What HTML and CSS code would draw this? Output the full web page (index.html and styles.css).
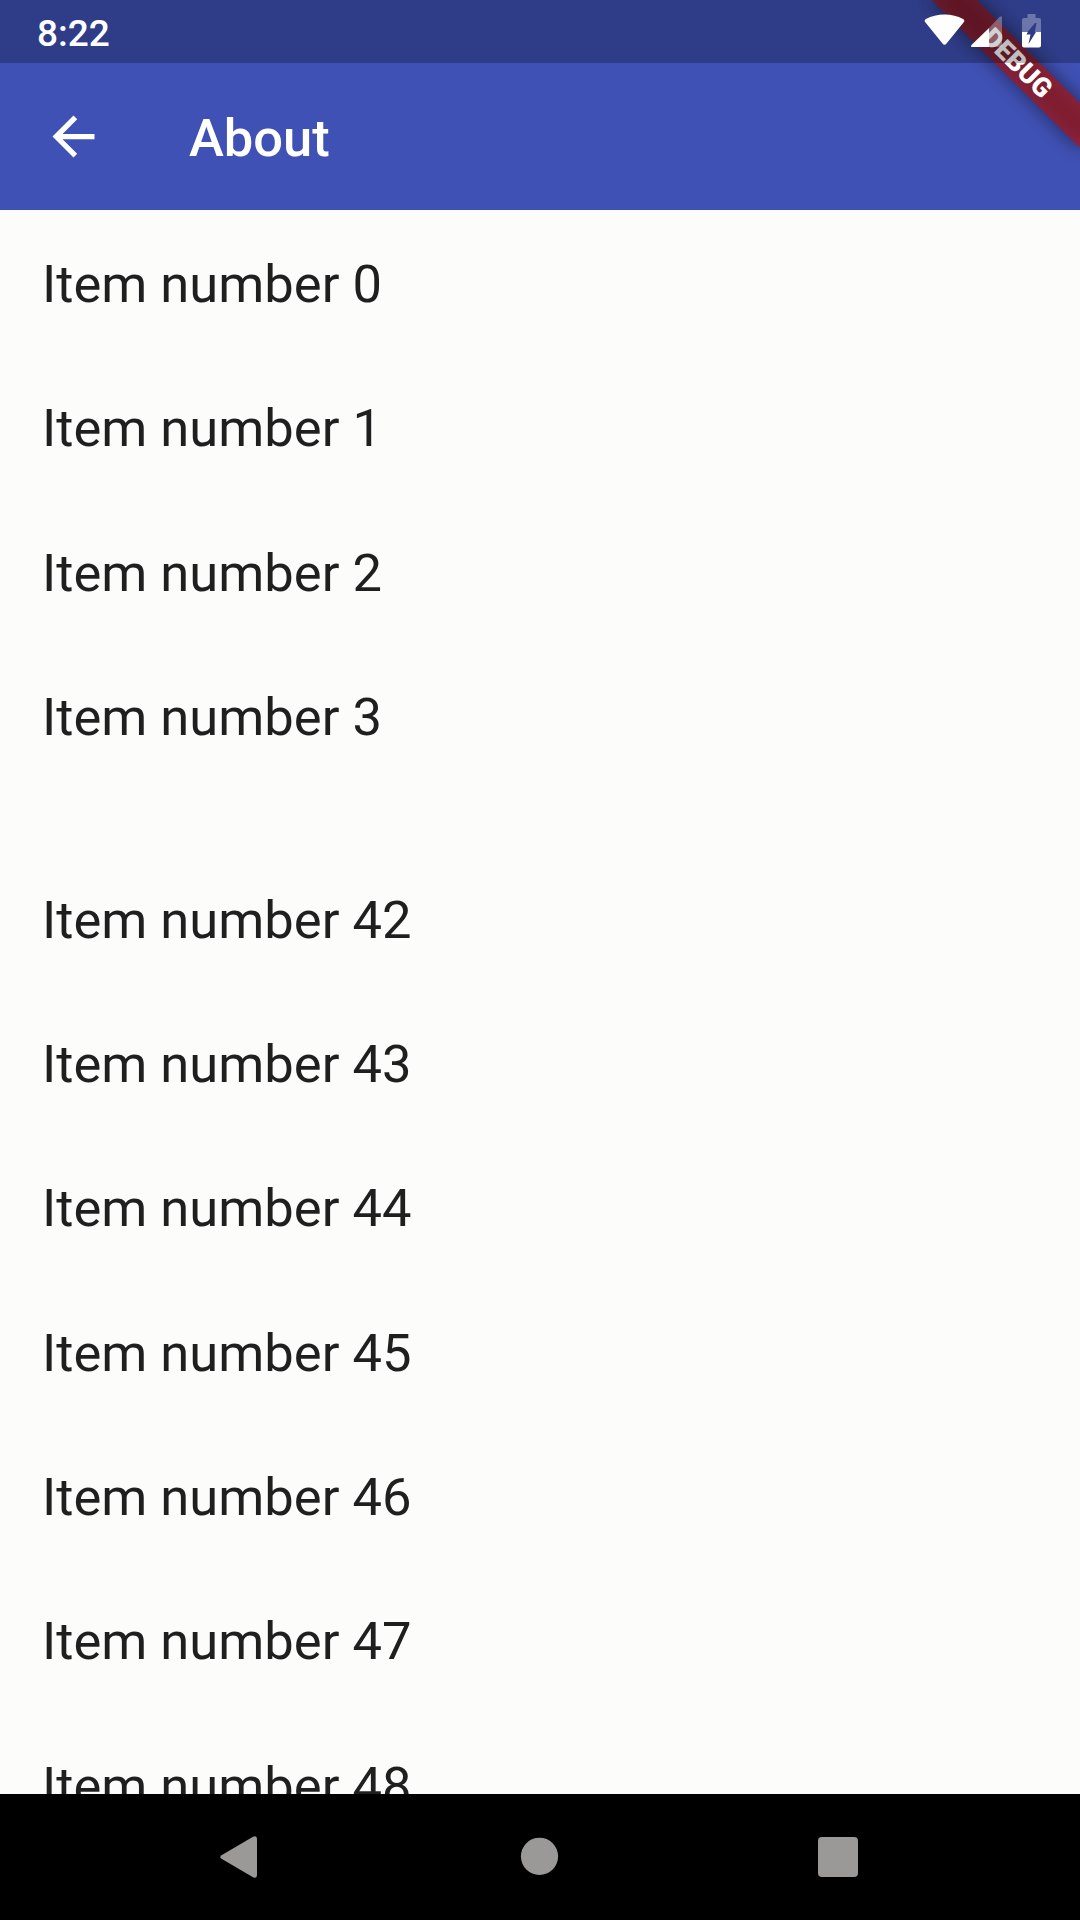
FILE: index.html
```
<!DOCTYPE html>
<html lang="en">
<head>
<meta charset="utf-8">
<title>About</title>
<link rel="stylesheet" href="styles.css">
</head>
<body>
<div class="screen">
  <header class="top">
    <div class="status-space"></div>
    <div class="app-bar">
      <svg class="back" viewBox="0 0 24 24" aria-label="Back"><path d="M20 11H7.83l5.59-5.59L12 4l-8 8 8 8 1.41-1.41L7.83 13H20v-2z"/></svg>
      <h1 class="title">About</h1>
    </div>
  </header>
  <main class="content">
    <ul class="list list-first">
      <li class="item">Item number 0</li>
      <li class="item">Item number 1</li>
      <li class="item">Item number 2</li>
      <li class="item">Item number 3</li>
    </ul>
    <ul class="list">
      <li class="item">Item number 42</li>
      <li class="item">Item number 43</li>
      <li class="item">Item number 44</li>
      <li class="item">Item number 45</li>
      <li class="item">Item number 46</li>
      <li class="item">Item number 47</li>
      <li class="item">Item number 48</li>
    </ul>
  </main>
  <nav class="nav-bar">
    <svg class="nav-icon" viewBox="0 0 48 48"><path d="M4.500 25.800Q2 24 4.500 22.200L36 3.800Q40 2 40 6V42Q40 46 36 44.200Z"/></svg>
    <svg class="nav-icon" viewBox="0 0 48 48"><circle cx="23.500" cy="23.300" r="18.600"/></svg>
    <svg class="nav-icon" viewBox="0 0 48 48"><rect x="3" y="4" width="40" height="40" rx="4"/></svg>
  </nav>
  <div class="banner-clip"><div class="banner">DEBUG</div></div>
  <div class="status-bar">
    <span class="clock">8:22</span>
    <svg class="status-icons" viewBox="0 0 130 63">
      <path d="M5.500 22.500Q3.500 20.500 6 19Q14 14.500 24.500 14.500T43 19Q45.500 20.500 43.500 22.500L26.500 43.500Q24.500 46 22.500 43.500Z"/>
      <path d="M69 28V47H52.500Q50 47 51.500 45Z"/>
      <path class="dim" d="M69 28L79.500 17Q82 15 82 18V45.500Q82 47 80.500 47H69Z"/>
      <path class="dim" d="M102 32V20Q102 18 104 18H107.500V14H115.500V18H119Q121 18 121 20V32H114.800L116.500 23H115L107.500 32Z"/>
      <path d="M102 32H107.800L106.500 34.500H110.500L108.500 44L116 32H121V45.500Q121 47.500 119 47.500H104Q102 47.500 102 45.500Z"/>
    </svg>
  </div>
</div>
</body>
</html>
```
FILE: styles.css
```
* { box-sizing: border-box; margin: 0; padding: 0; }

body {
  width: 1080px;
  height: 1920px;
  overflow: hidden;
  font-family: Roboto, "Noto Sans", sans-serif;
}

.screen {
  position: relative;
  display: flex;
  flex-direction: column;
  width: 1080px;
  height: 1920px;
  background: #fcfcfa;
}

.top { flex: none; background: #3f51b5; }
.status-space { height: 63px; }

.app-bar {
  display: flex;
  align-items: center;
  gap: 84px;
  height: 147px;
  padding-left: 42px;
  color: #fff;
}

.back { width: 63px; height: 63px; fill: #fff; }
.title { padding-top: 2px; font-size: 52.5px; font-weight: 500; line-height: 62px; }

.content {
  flex: 1;
  display: flex;
  flex-direction: column;
  gap: 58.7px;
  min-height: 0;
  overflow: hidden;
}

.list { list-style: none; }
.list-first { padding-top: 2px; }

.item {
  height: 144.3px;
  padding-left: 42px;
  font-size: 52.5px;
  line-height: 144.3px;
  color: #1f1f1f;
}

.nav-bar {
  flex: none;
  display: flex;
  align-items: center;
  justify-content: center;
  gap: 251px;
  height: 126px;
  background: #000;
}

.nav-icon { width: 48px; height: 48px; fill: #9a9997; }

.banner-clip {
  position: absolute;
  top: 0;
  right: 0;
  width: 210px;
  height: 210px;
  overflow: hidden;
}

/* Ribbon across the top right corner, rotated about that corner */
.banner {
  position: absolute;
  top: 72.5px;
  left: 105px;
  width: 210px;
  height: 31.5px;
  color: #fff;
  font-size: 26.8px;
  font-weight: 900;
  line-height: 33.5px;
  text-align: center;
  transform: rotate(45deg);
  transform-origin: 105px -72.5px;
}

/* The shadow shows through the translucent ribbon */
.banner::before,
.banner::after {
  content: "";
  position: absolute;
  inset: 0;
  z-index: -1;
}

.banner::before { background: rgba(0, 0, 0, 0.5); filter: blur(10px); }
.banner::after { background: rgba(176, 22, 22, 0.66); }

.status-bar {
  position: absolute;
  top: 0;
  left: 0;
  display: flex;
  align-items: center;
  justify-content: space-between;
  width: 1080px;
  height: 63px;
  padding: 3px 30px 0 37px;
  background: rgba(0, 0, 0, 0.25);
}

.clock { color: #fff; font-size: 37px; font-weight: 500; }
.status-icons { width: 130px; height: 63px; margin-top: -3px; fill: #fff; }
.dim { fill-opacity: 0.3; }
```
